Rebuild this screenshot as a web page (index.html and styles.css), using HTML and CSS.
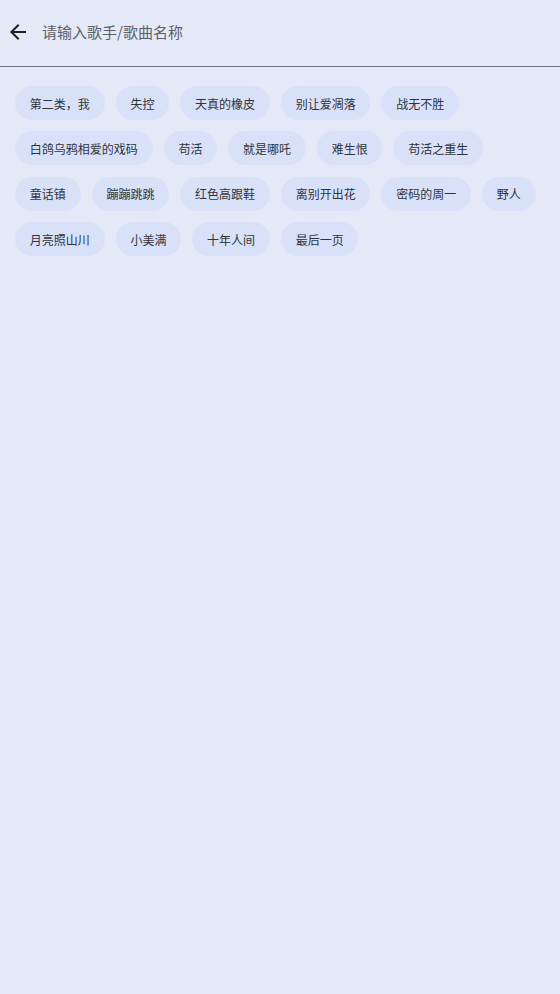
FILE: index.html
```html
<!DOCTYPE html>
<html lang="zh">
<head>
<meta charset="utf-8">
<link rel="stylesheet" href="styles.css">
</head>
<body>
<div class="page">
  <header class="search-bar">
    <span class="back">
      <svg width="24" height="24" viewBox="0 0 24 24"><path d="M20 11H7.83l5.59-5.59L12 4l-8 8 8 8 1.41-1.41L7.83 13H20v-2z" fill="#1f1f1f"/></svg>
    </span>
    <span class="placeholder">请输入歌手/歌曲名称</span>
  </header>
  <div class="tags">
    <span class="tag">第二类，我</span>
    <span class="tag">失控</span>
    <span class="tag">天真的橡皮</span>
    <span class="tag">别让爱凋落</span>
    <span class="tag">战无不胜</span>
    <span class="tag">白鸽乌鸦相爱的戏码</span>
    <span class="tag">苟活</span>
    <span class="tag">就是哪吒</span>
    <span class="tag">难生恨</span>
    <span class="tag">苟活之重生</span>
    <span class="tag">童话镇</span>
    <span class="tag">蹦蹦跳跳</span>
    <span class="tag">红色高跟鞋</span>
    <span class="tag">离别开出花</span>
    <span class="tag">密码的周一</span>
    <span class="tag">野人</span>
    <span class="tag">月亮照山川</span>
    <span class="tag">小美满</span>
    <span class="tag">十年人间</span>
    <span class="tag">最后一页</span>
  </div>
</div>
</body>
</html>
```
FILE: styles.css
```css
html, body {
  margin: 0;
  padding: 0;
  background: #e3e9f7;
}
body {
  font-family: "Noto Sans CJK SC", "Noto Sans", sans-serif;
  width: 560px;
  height: 994px;
}
.page {
  display: flex;
  flex-direction: column;
}
.search-bar {
  height: 67px;
  box-sizing: border-box;
  border-bottom: 1px solid #74777f;
  display: flex;
  align-items: center;
  padding: 0 0 2px 6px;
}
.back {
  width: 24px;
  height: 24px;
  display: flex;
  margin-right: 12px;
}
.placeholder {
  font-size: 15px;
  color: #5d6068;
  line-height: 20px;
}
.tags {
  display: flex;
  flex-wrap: wrap;
  column-gap: 11px;
  row-gap: 11.4px;
  padding: 19px 15px 0 15px;
}
.tag {
  height: 34px;
  padding: 0 14.8px;
  border-radius: 17px;
  background: #d9e1f8;
  color: #30333a;
  font-size: 12px;
  display: flex;
  align-items: center;
  box-sizing: border-box;
}
```
